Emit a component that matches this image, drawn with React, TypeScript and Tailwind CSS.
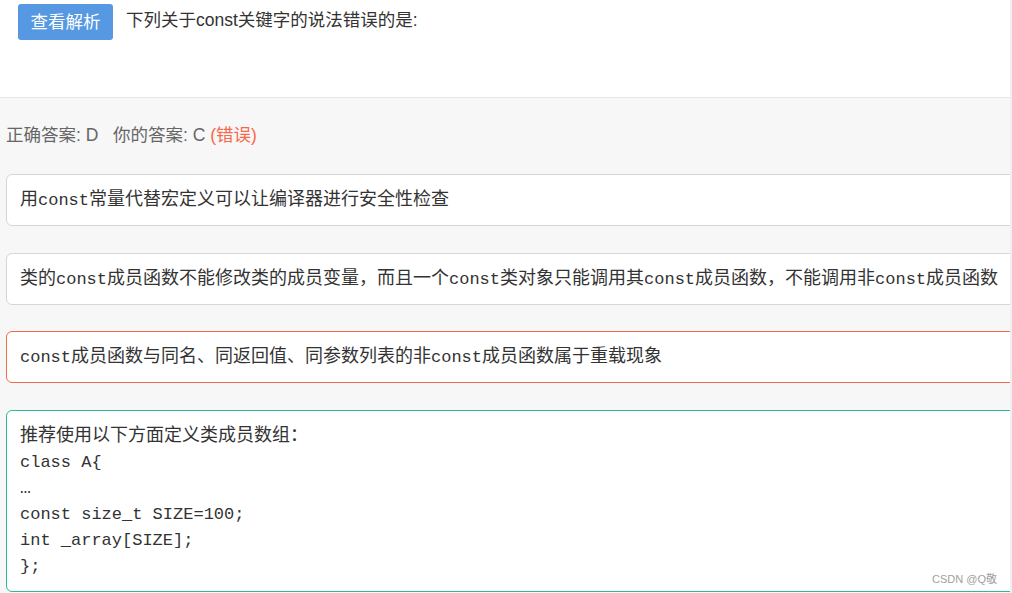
import React from 'react';

const OPTIONS = [
  { text: '用const常量代替宏定义可以让编译器进行安全性检查', tone: 'plain' },
  {
    text: '类的const成员函数不能修改类的成员变量，而且一个const类对象只能调用其const成员函数，不能调用非const成员函数',
    tone: 'plain',
  },
  { text: 'const成员函数与同名、同返回值、同参数列表的非const成员函数属于重载现象', tone: 'wrong' },
  {
    text: '推荐使用以下方面定义类成员数组：\nclass A{\n…\nconst size_t SIZE=100;\nint _array[SIZE];\n};',
    tone: 'right',
  },
];

// latin runs are set a touch smaller than the CJK ones, like Courier New next to SimSun
function Mixed({ text }: { text: string }) {
  const parts = text.split(/([\x20-\x7E]+)/);
  return (
    <>
      {parts.map((p, i) =>
        /^[\x20-\x7E]+$/.test(p) ? (
          <span key={i} className="text-[17px] leading-[20px]">
            {p}
          </span>
        ) : (
          <span key={i}>{p}</span>
        )
      )}
    </>
  );
}

export default function App() {
  return (
    <div className="relative flex w-[1012px] h-[593px] overflow-hidden bg-white font-['Liberation_Sans','Noto_Sans_CJK_SC',sans-serif]">
      <div className="flex-1 min-w-0 flex flex-col">
        {/* Question header */}
        <div className="h-[98px] shrink-0 flex items-start bg-white border-b border-[#e6e6e6]">
          <button className="ml-[18px] mt-[4px] w-[95px] h-[36px] rounded-[3px] bg-[#5699e2] text-white text-[17.5px] leading-[36px]">
            查看解析
          </button>
          <div className="ml-[13px] mt-[7px] text-[17.5px] leading-[26px] text-[#333]">下列关于const关键字的说法错误的是:</div>
        </div>

        {/* Answer area */}
        <div className="flex-1 min-h-0 bg-[#f7f7f7] pl-[6px]">
          <div className="mt-[23px] text-[17.5px] leading-[28px] text-[#666]">
            正确答案: D&nbsp;&nbsp;&nbsp;你的答案: C <span className="text-[#f7694a]">(错误)</span>
          </div>

          <div className="mt-[25px] mr-[-40px] flex flex-col gap-[26.7px]">
            {OPTIONS.map((o, i) => (
              <div
                key={i}
                className={
                  'shrink-0 rounded-[6px] border bg-white py-[12px] pl-[13px] pr-4 text-[18px] leading-[26px] text-[#333] whitespace-pre font-["Liberation_Mono","Noto_Sans_CJK_SC",monospace] ' +
                  (o.tone === 'wrong'
                    ? 'border-[#f5694b]'
                    : o.tone === 'right'
                    ? 'border-[#28bb98]'
                    : 'border-[#d6d6d6]')
                }
              >
                <Mixed text={o.text} />
              </div>
            ))}
          </div>
        </div>
      </div>
      <div className="w-[2px] bg-[#f0f0f0]" />

      {/* watermark */}
      <div className="absolute right-[15px] top-[571px] text-[11px] text-[#a0a0a0]">CSDN @Q敬</div>
    </div>
  );
}
